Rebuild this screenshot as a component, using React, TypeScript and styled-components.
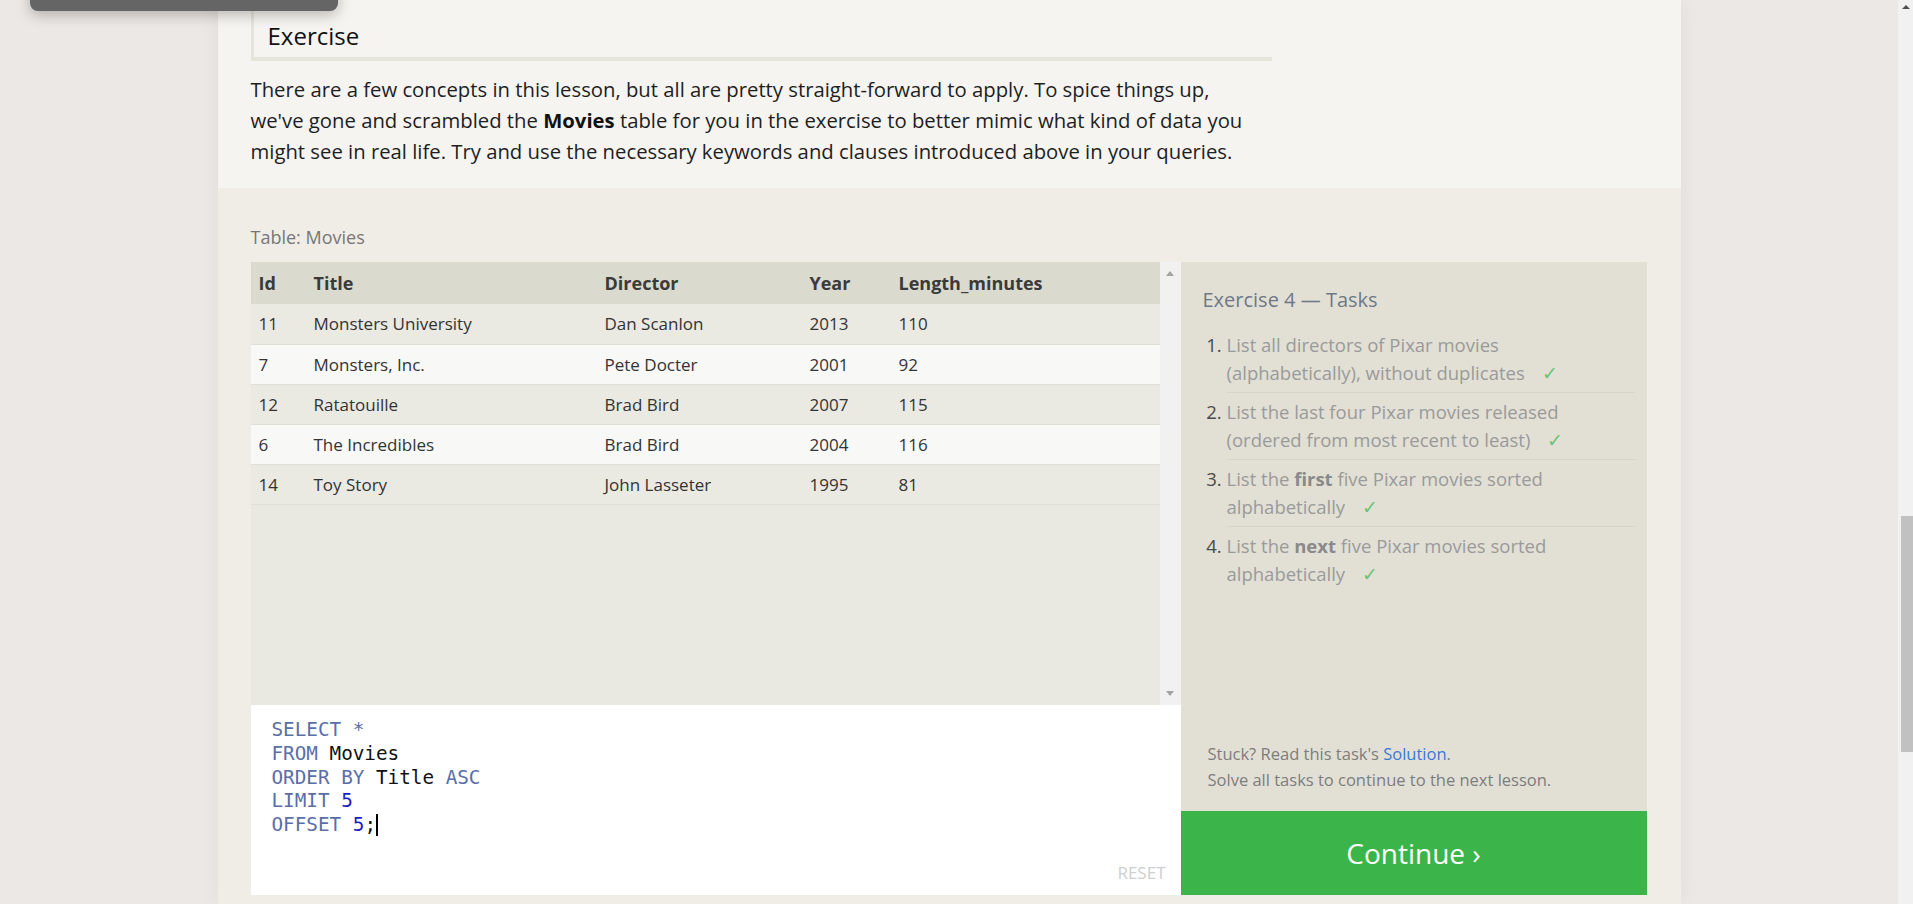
import React from "react";
import styled, { createGlobalStyle } from "styled-components";

const Global = createGlobalStyle`
  html, body { margin: 0; padding: 0; }
  body {
    background: #ece8e5;
    font-family: "Open Sans", "Liberation Sans", sans-serif;
    overflow: hidden;
  }
  * { box-sizing: border-box; }
`;

const Viewport = styled.div`
  display: flex;
  height: 904px;
  overflow: hidden;
`;

const Main = styled.div`
  flex: 1;
  position: relative;
  overflow: hidden;
`;

const ScrollTrack = styled.div`
  width: 15px;
  background: #f1f1f1;
  display: flex;
  flex-direction: column;
  align-items: flex-end;
`;

const ScrollArrow = styled.div`
  width: 0;
  height: 0;
  margin: 5px 0 0 0;
  align-self: center;
  border-left: 4px solid transparent;
  border-right: 4px solid transparent;
  border-bottom: 4px solid #505050;
`;

const ScrollThumb = styled.div`
  width: 12px;
  height: 236px;
  margin-top: 507px;
  background: #c1c1c1;
`;

const Toast = styled.div`
  position: absolute;
  left: 30px;
  top: -20px;
  width: 308px;
  height: 31px;
  background: #656565;
  border-radius: 8px;
  box-shadow: 0 4px 14px rgba(0, 0, 0, 0.25);
  z-index: 5;
`;

const Panel = styled.div`
  width: 1463px;
  margin: 0 auto;
  box-shadow: 0 0 22px rgba(0, 0, 0, 0.05);
`;

const Intro = styled.section`
  background: #f5f4f0;
  padding: 0 0 21px 33px;
`;

const Heading = styled.h3`
  margin: 0;
  width: 1021px;
  padding: 20px 0 5px 14px;
  border-left: 3px solid #e6e5da;
  border-bottom: 4px solid #e6e5da;
  font-weight: 400;
  font-size: 24px;
  line-height: 32px;
  color: #111;
`;

const Para = styled.p`
  margin: 13px 0 0 0;
  width: 1012px;
  font-size: 20.3px;
  line-height: 31px;
  color: #1e1e1e;
  b { font-weight: 700; color: #111; }
`;

const Workspace = styled.section`
  background: #f0ede6;
  padding: 37px 34px 9px 33px;
`;

const Caption = styled.div`
  font-size: 18px;
  line-height: 24px;
  color: #777;
  margin-bottom: 13px;
`;

const Split = styled.div`
  display: flex;
`;

const LeftCol = styled.div`
  width: 930px;
  display: flex;
  flex-direction: column;
`;

const TableBox = styled.div`
  height: 443px;
  display: flex;
  background: #e9e8e1;
`;

const TableScroll = styled.div`
  flex: 1;
  overflow: hidden;
`;

const InnerScrollbar = styled.div`
  width: 21px;
  background: #f1f1f1;
  display: flex;
  flex-direction: column;
  justify-content: space-between;
  align-items: center;
  padding: 9px 0 9px 0;
`;

const Tri = styled.div<{ $down?: boolean }>`
  width: 0;
  height: 0;
  border-left: 4px solid transparent;
  border-right: 4px solid transparent;
  ${(p) =>
    p.$down
      ? "border-top: 5px solid #a3a3a3;"
      : "border-bottom: 5px solid #a3a3a3;"}
`;

const Table = styled.table`
  width: 100%;
  border-collapse: collapse;
  table-layout: fixed;
`;

const Th = styled.th`
  text-align: left;
  font-weight: 700;
  font-size: 18px;
  color: #3a3a3a;
  height: 42px;
  padding: 0 0 0 8px;
  background: #dbdacf;
`;

const Tr = styled.tr<{ $even?: boolean }>`
  background: ${(p) => (p.$even ? "#f8f8f7" : "#eae9e2")};
  border-bottom: 1px solid #e1e0d8;
`;

const Td = styled.td`
  font-size: 17px;
  color: #333;
  height: 40px;
  padding: 0 0 0 8px;
  white-space: nowrap;
`;

const Editor = styled.div`
  height: 190px;
  background: #fff;
  padding: 13px 15px 11px 21px;
  display: flex;
  flex-direction: column;
`;

const Code = styled.pre`
  margin: 0;
  font-family: "DejaVu Sans Mono", "Liberation Mono", monospace;
  font-size: 19.3px;
  line-height: 23.75px;
  color: #111;
`;

const Kw = styled.span`
  color: #5a6ea8;
`;

const Num = styled.span`
  color: #1d1dbf;
`;

const Caret = styled.span`
  display: inline-block;
  width: 2px;
  height: 22px;
  background: #000;
  vertical-align: -5px;
`;

const Reset = styled.div`
  margin-top: auto;
  align-self: flex-end;
  font-size: 17px;
  line-height: 22px;
  color: #cfcfcf;
  text-transform: uppercase;
`;

const RightCol = styled.div`
  width: 466px;
  display: flex;
  flex-direction: column;
`;

const Tasks = styled.div`
  flex: 1;
  background: #e2e0d5;
  padding: 24px 12px 0 22px;
  display: flex;
  flex-direction: column;
`;

const TasksTitle = styled.div`
  font-size: 20px;
  line-height: 28px;
  color: #6f7886;
  margin-bottom: 12px;
`;

const TaskList = styled.ol`
  margin: 0;
  padding: 0 0 0 24px;
  font-size: 18.5px;
  line-height: 28px;
  color: #9a9a9a;
`;

const Task = styled.li<{ $last?: boolean }>`
  padding: 5px 20px 5px 0;
  border-bottom: ${(p) => (p.$last ? "none" : "1px solid #d7d5c9")};
  &::marker { color: #4a4a4a; }
  b { color: #8a8a8a; }
`;

const Check = styled.span`
  color: #6cc476;
  margin-left: 12px;
`;

const Help = styled.div`
  margin-top: auto;
  padding: 0 0 18px 5px;
  font-size: 16.5px;
  line-height: 26px;
  color: #7d7d7d;
  a { color: #3a78d6; text-decoration: none; }
`;

const Continue = styled.button`
  height: 84px;
  border: none;
  background: #3bb54a;
  color: #fff;
  font-family: "Open Sans", "Liberation Sans", sans-serif;
  font-size: 28px;
  cursor: pointer;
`;

const rows = [
  ["11", "Monsters University", "Dan Scanlon", "2013", "110"],
  ["7", "Monsters, Inc.", "Pete Docter", "2001", "92"],
  ["12", "Ratatouille", "Brad Bird", "2007", "115"],
  ["6", "The Incredibles", "Brad Bird", "2004", "116"],
  ["14", "Toy Story", "John Lasseter", "1995", "81"],
];

export default function App() {
  return (
    <>
      <Global />
      <Viewport>
        <Main>
          <Toast />
          <Panel>
            <Intro>
              <Heading>Exercise</Heading>
              <Para>
                There are a few concepts in this lesson, but all are pretty
                straight-forward to apply. To spice things up, we've gone and
                scrambled the <b>Movies</b> table for you in the exercise to
                better mimic what kind of data you might see in real life. Try
                and use the necessary keywords and clauses introduced above in
                your queries.
              </Para>
            </Intro>
            <Workspace>
              <Caption>Table: Movies</Caption>
              <Split>
                <LeftCol>
                  <TableBox>
                    <TableScroll>
                      <Table>
                        <colgroup>
                          <col style={{ width: 55 }} />
                          <col style={{ width: 291 }} />
                          <col style={{ width: 205 }} />
                          <col style={{ width: 89 }} />
                          <col />
                        </colgroup>
                        <thead>
                          <tr>
                            <Th>Id</Th>
                            <Th>Title</Th>
                            <Th>Director</Th>
                            <Th>Year</Th>
                            <Th>Length_minutes</Th>
                          </tr>
                        </thead>
                        <tbody>
                          {rows.map((r, i) => (
                            <Tr key={r[0]} $even={i % 2 === 1}>
                              {r.map((c, j) => (
                                <Td key={j}>{c}</Td>
                              ))}
                            </Tr>
                          ))}
                        </tbody>
                      </Table>
                    </TableScroll>
                    <InnerScrollbar>
                      <Tri />
                      <Tri $down />
                    </InnerScrollbar>
                  </TableBox>
                  <Editor>
                    <Code>
                      <Kw>SELECT *</Kw>
                      {"\n"}
                      <Kw>FROM</Kw> Movies{"\n"}
                      <Kw>ORDER BY</Kw> Title <Kw>ASC</Kw>
                      {"\n"}
                      <Kw>LIMIT</Kw> <Num>5</Num>
                      {"\n"}
                      <Kw>OFFSET</Kw> <Num>5</Num>;<Caret />
                    </Code>
                    <Reset>Reset</Reset>
                  </Editor>
                </LeftCol>
                <RightCol>
                  <Tasks>
                    <TasksTitle>Exercise 4 — Tasks</TasksTitle>
                    <TaskList>
                      <Task>
                        List all directors of Pixar movies (alphabetically),
                        without duplicates <Check>✓</Check>
                      </Task>
                      <Task>
                        List the last four Pixar movies released (ordered from
                        most recent to least) <Check>✓</Check>
                      </Task>
                      <Task>
                        List the <b>first</b> five Pixar movies sorted
                        alphabetically <Check>✓</Check>
                      </Task>
                      <Task $last>
                        List the <b>next</b> five Pixar movies sorted
                        alphabetically <Check>✓</Check>
                      </Task>
                    </TaskList>
                    <Help>
                      Stuck? Read this task's <a href="#">Solution</a>.
                      <br />
                      Solve all tasks to continue to the next lesson.
                    </Help>
                  </Tasks>
                  <Continue>Continue ›</Continue>
                </RightCol>
              </Split>
            </Workspace>
          </Panel>
        </Main>
        <ScrollTrack>
          <ScrollArrow />
          <ScrollThumb />
        </ScrollTrack>
      </Viewport>
    </>
  );
}
